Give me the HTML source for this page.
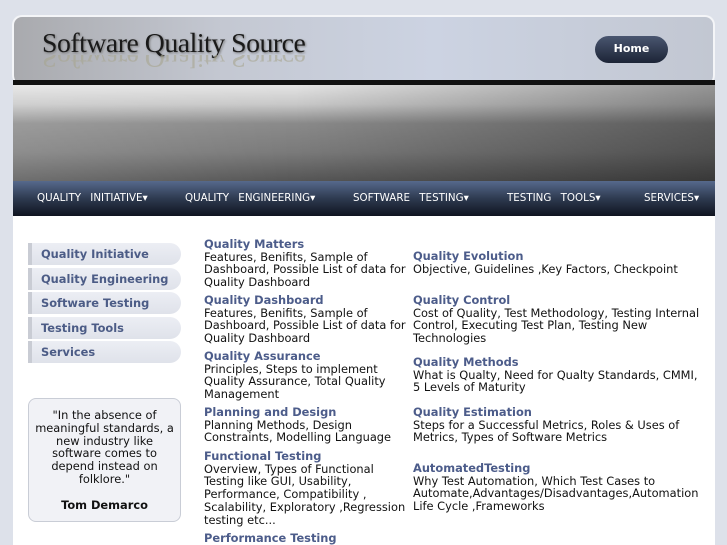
<!DOCTYPE html><html><head><meta charset="utf-8"><style>
*{margin:0;padding:0;box-sizing:border-box}
body{width:727px;height:545px;overflow:hidden;background:#dde1ea;font-family:"DejaVu Sans","Liberation Sans",sans-serif;position:relative}
.hdr{position:absolute;left:12px;top:15px;width:703px;height:70px;border-radius:10px;background:linear-gradient(90deg,#a9aaae 0%,#c4c8d2 30%,#ccd3e2 60%,#c2c7d2 100%);border:2px solid #f4f5f8;border-bottom:none}
.logo{position:absolute;left:42px;top:28px;font-family:"Liberation Serif",serif;font-size:27.8px;color:#1a1a1a;letter-spacing:-0.5px;text-shadow:1px 1px 2px #777}
.refl{position:absolute;left:42px;top:55px;font-family:"Liberation Serif",serif;font-size:27.8px;color:#a8a690;transform:scaleY(-1);opacity:.6;letter-spacing:-0.5px;height:18px;overflow:hidden}
.home{position:absolute;left:595px;top:36px;width:73px;height:27px;border-radius:14px;background:linear-gradient(#4a5670,#1c2436);color:#fff;font-size:11px;font-weight:bold;text-align:center;line-height:25px}
.blk{position:absolute;left:13px;top:80px;width:702px;height:5px;background:#111}
.ban{position:absolute;left:13px;top:85px;width:702px;height:96px;background:linear-gradient(180deg,#e4e4e4 0%,#c8c8c8 20%,#8a8a8a 40%,#7a7a7a 70%,#555 100%);}
.ban:after{content:"";position:absolute;inset:0;background:linear-gradient(90deg,rgba(255,255,255,.15),rgba(0,0,0,0) 40%,rgba(0,0,0,.35))}
.nav{position:absolute;left:13px;top:181px;width:702px;height:35px;background:linear-gradient(#56698c,#2e3a50 50%,#0f1420);color:#fff;font-size:10.3px}
.nav span{position:absolute;top:11px;word-spacing:6px}
.main{position:absolute;left:13px;top:216px;width:702px;height:329px;background:#fff}
.lm{position:absolute;left:28px;width:153px;height:22px;border-radius:0 11px 11px 0;background:linear-gradient(#eceef4,#dfe2ea);border-left:4px solid #c9ccd4;color:#4c5c86;font-weight:bold;font-size:11.4px;padding-left:9px;line-height:22px}
.q{position:absolute;left:28px;top:398px;width:153px;height:124px;border:1px solid #c9cdd6;border-radius:8px;background:#f1f2f6;text-align:center;font-size:11.4px;line-height:12.8px;color:#111;padding:10px 1px 0}
.c{position:absolute;font-size:11.4px;line-height:12.7px;color:#111;width:212px}
.c b{display:block;color:#4c5c8a}
</style></head><body>
<div class="hdr"></div>
<div class="logo">Software Quality Source</div>
<div class="refl">Software Quality Source</div>
<div class="home">Home</div>
<div class="blk"></div><div class="ban"></div>
<div class="nav">
<span style="left:24px">QUALITY INITIATIVE▾</span>
<span style="left:172px">QUALITY ENGINEERING▾</span>
<span style="left:340px">SOFTWARE TESTING▾</span>
<span style="left:494px">TESTING TOOLS▾</span>
<span style="left:631px">SERVICES▾</span>
</div>
<div class="main"></div>
<div class="lm" style="top:243px">Quality Initiative</div>
<div class="lm" style="top:268px">Quality Engineering</div>
<div class="lm" style="top:292px">Software Testing</div>
<div class="lm" style="top:317px">Testing Tools</div>
<div class="lm" style="top:341px">Services</div>
<div class="q">"In the absence of<br>meaningful standards, a<br>new industry like<br>software comes to<br>depend instead on<br>folklore."<br><br><b>Tom Demarco</b></div>
<div class="c" style="left:204px;top:238px"><b>Quality Matters</b>Features, Benifits, Sample of Dashboard, Possible List of data for Quality Dashboard</div>
<div class="c" style="left:204px;top:294px"><b>Quality Dashboard</b>Features, Benifits, Sample of Dashboard, Possible List of data for Quality Dashboard</div>
<div class="c" style="left:204px;top:350px"><b>Quality Assurance</b>Principles, Steps to implement Quality Assurance, Total Quality Management</div>
<div class="c" style="left:204px;top:406px"><b>Planning and Design</b>Planning Methods, Design Constraints, Modelling Language</div>
<div class="c" style="left:204px;top:450px"><b>Functional Testing</b>Overview, Types of Functional Testing like GUI, Usability, Performance, Compatibility , Scalability, Exploratory ,Regression testing etc...</div>
<div class="c" style="left:204px;top:532px"><b>Performance Testing</b></div>
<div class="c" style="left:413px;top:250px;width:300px"><b>Quality Evolution</b>Objective, Guidelines ,Key Factors, Checkpoint</div>
<div class="c" style="left:413px;top:294px;width:300px"><b>Quality Control</b>Cost of Quality, Test Methodology, Testing Internal Control, Executing Test Plan, Testing New Technologies</div>
<div class="c" style="left:413px;top:356px;width:300px"><b>Quality Methods</b>What is Qualty, Need for Qualty Standards, CMMI,<br>5 Levels of Maturity</div>
<div class="c" style="left:413px;top:406px;width:300px"><b>Quality Estimation</b>Steps for a Successful Metrics, Roles &amp; Uses of Metrics, Types of Software Metrics</div>
<div class="c" style="left:413px;top:462px;width:300px"><b>AutomatedTesting</b>Why Test Automation, Which Test Cases to Automate,Advantages/Disadvantages,Automation Life Cycle ,Frameworks</div>
</body></html>
